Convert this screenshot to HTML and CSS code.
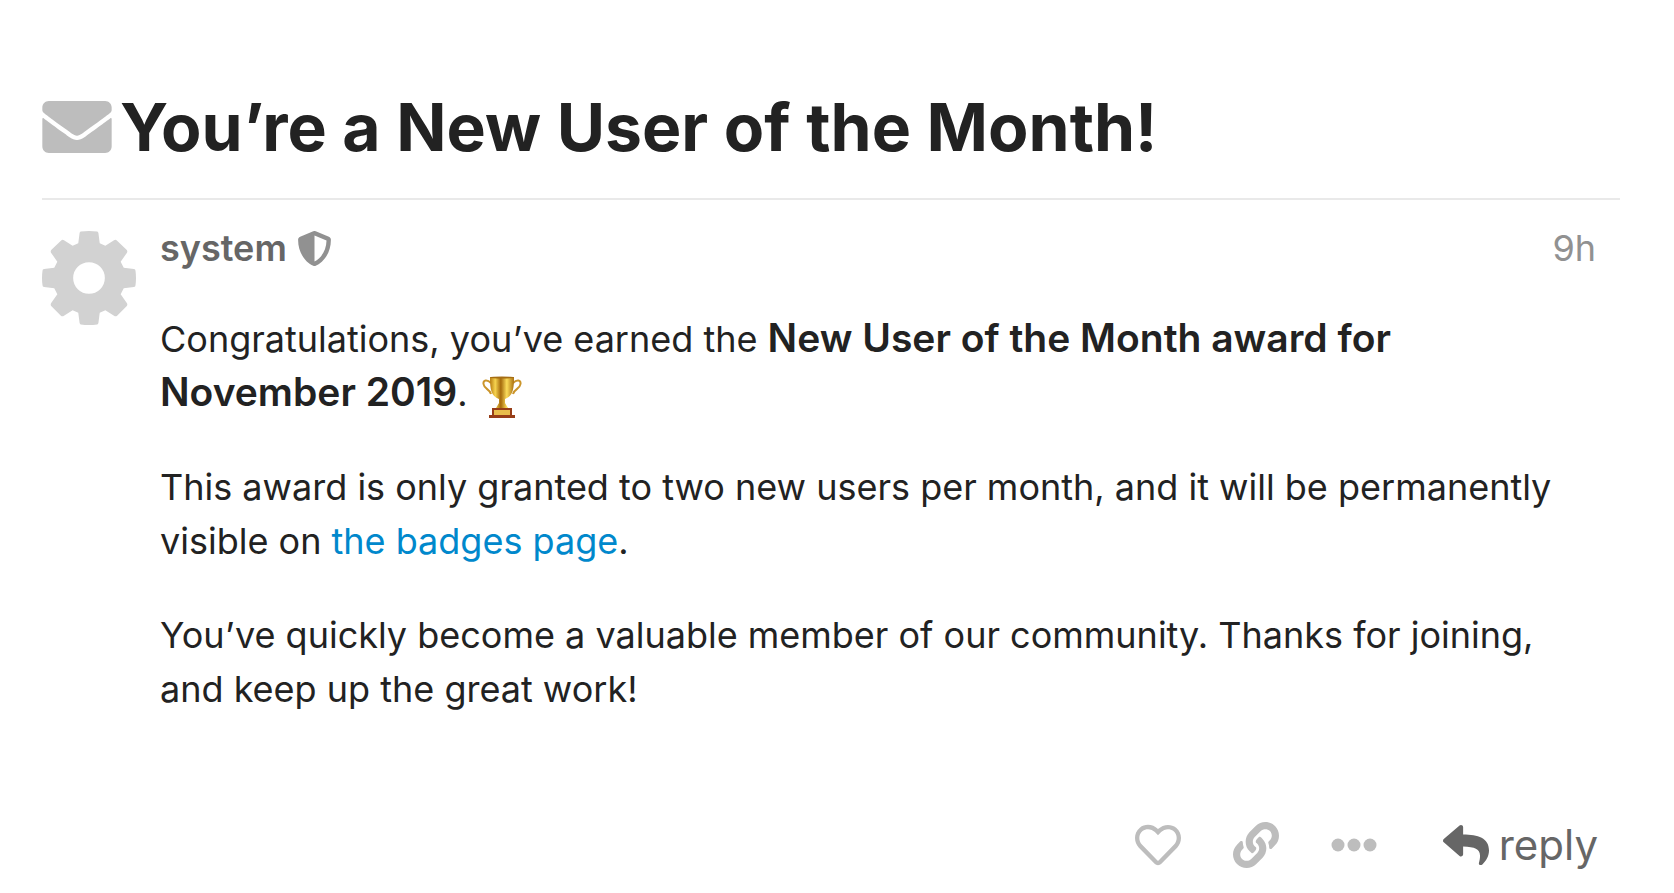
FILE: index.html
```html
<!DOCTYPE html>
<html lang="en">
    <head>
        <meta charset="UTF-8" />
        <meta name="viewport" content="width=device-width, initial-scale=1.0" />
        <title>You’re a New User of the Month!</title>
        <link rel="stylesheet" href="styles.css">
    </head>
    <body>
        <main class="topic">
            <header class="topic-header">
                <svg class="icon-envelope" viewBox="0 64 512 384" aria-hidden="true">
                    <path d="M502.3 190.8c3.9-3.1 9.7-.2 9.7 4.7V400c0 26.5-21.5 48-48 48H48c-26.5 0-48-21.5-48-48V195.6c0-5 5.7-7.8 9.7-4.7 22.4 17.4 52.1 39.5 154.1 113.6 21.1 15.4 56.7 47.8 92.2 47.6 35.7.3 72-32.8 92.3-47.6 102-74.1 131.6-96.3 154-113.7zM256 320c23.2.4 56.6-29.2 73.4-41.4 132.7-96.3 142.8-104.7 173.4-128.7 5.8-4.5 9.2-11.5 9.2-18.9v-19c0-26.5-21.5-48-48-48H48c-26.5 0-48 21.5-48 48v19c0 7.4 3.4 14.3 9.2 18.9 30.6 23.9 40.7 32.4 173.4 128.7 16.8 12.2 50.2 41.8 73.4 41.4z"/>
                </svg>
                <h1>You’re a New User of the Month!</h1>
            </header>

            <article class="post">
                <svg class="avatar" viewBox="1 1 92 92" aria-hidden="true">
                    <path fill-rule="evenodd" d="M39 1.500Q47 0.500 55 1.500Q56 1.700 56.200 3L57.500 13L63 15.500L71.500 10Q73 9 74.500 10.500L84 19.500Q85 21 84 22.500L78 31L81 37L91 38.200Q92.500 38.500 92.500 40Q93.500 47 92.500 54Q92.500 55.500 91 55.800L81 57L78 63L84 71.500Q85 73 84 74.500L74.500 84Q73 85 71.500 84L63 78.500L57.500 81L56.200 91Q56 92.300 55 92.500Q47 93.500 39 92.500Q38 92.300 37.800 91L36.500 81L31 78.500L22.500 84Q21 85 19.500 84L10 74.500Q9 73 10 71.500L16 63L13 57L3 55.800Q1.500 55.500 1.500 54Q0.500 47 1.500 40Q1.500 38.500 3 38.200L13 37L16 31L10 22.500Q9 21 10 19.500L19.500 10.500Q21 9 22.500 10L31 15.500L36.500 13L37.800 3Q38 1.700 39 1.500ZM47 31.500a15.500 15.500 0 1 0 0 31a15.500 15.500 0 1 0 0-31z"/>
                </svg>
                <div class="post-body">
                    <div class="post-meta">
                        <span class="username">system</span>
                        <svg class="icon-shield" viewBox="0 0 512 512" aria-hidden="true">
                            <path d="M466.5 83.7l-192-80a48.15 48.15 0 0 0-36.9 0l-192 80C27.7 91.1 16 108.6 16 128c0 198.5 114.5 335.7 221.5 380.3 11.8 4.9 25.1 4.9 36.9 0C360.1 472.6 496 349.3 496 128c0-19.4-11.7-36.9-29.5-44.3zM256.1 446.3l-.1-381 175.9 73.3c-3.3 151.4-82.1 261.1-175.8 307.7z"/>
                        </svg>
                        <time class="post-date">9h</time>
                    </div>

                    <div class="cooked">
                        <p>
                            Congratulations, you’ve earned the <strong>New User of the Month award for<br>November 2019</strong>.
                            <svg class="trophy" viewBox="0 0 40 42" role="img" aria-label="trophy">
                                <defs>
                                    <linearGradient id="gold">
                                        <stop offset="0" stop-color="#b67a10"/>
                                        <stop offset=".22" stop-color="#f6d34f"/>
                                        <stop offset=".45" stop-color="#a56a0c"/>
                                        <stop offset=".7" stop-color="#fbdc5a"/>
                                        <stop offset="1" stop-color="#a96e0e"/>
                                    </linearGradient>
                                </defs>
                                <path d="M9 7C5 3 1 4 1.500 8C2 13 8 13 9 18M31 7C35 3 39 4 38.500 8C38 13 32 13 31 18" fill="none" stroke="#cb952b" stroke-width="2"/>
                                <path d="M8 1H32C32 13 31 20 23 23V27L26 32H14L17 27V23C9 20 8 13 8 1Z" fill="url(#gold)"/>
                                <ellipse cx="20" cy="1.500" rx="12" ry="1" fill="#a56d13"/>
                                <path d="M10 32H30V39H33V42H7V39H10Z" fill="#973d18"/>
                                <path d="M12 34H28V39H12Z" fill="#e9bd4b"/>
                            </svg>
                        </p>
                        <p>This award is only granted to two new users per month, and it will be permanently visible on <a href="#">the badges page</a>.</p>
                        <p>You’ve quickly become a valuable member of our community. Thanks for joining, and keep up the great work!</p>
                    </div>

                    <div class="post-controls">
                        <button type="button" aria-label="Like">
                            <svg class="icon" viewBox="0 0 512 512" aria-hidden="true">
                                <path d="M458.4 64.3C400.6 15.7 311.3 23 256 79.3 200.7 23 111.4 15.6 53.6 64.3-21.6 127.6-10.6 230.8 43 285.5l175.400 178.700c10 10.2 23.4 15.9 37.6 15.9 14.3 0 27.6-5.6 37.6-15.8L469 285.6c53.5-54.7 64.7-157.9-10.6-221.3zm-23.6 187.5L259.4 430.5c-2.4 2.4-4.400 2.4-6.800 0L77.2 251.8c-36.5-37.2-43.9-107.6 7.3-150.7 38.9-32.7 98.9-27.8 136.5 10.5l35 35.700 35-35.700c37.8-38.5 97.8-43.2 136.5-10.6 51.1 43.1 43.5 113.9 7.3 150.8z"/>
                            </svg>
                        </button>
                        <button type="button" aria-label="Share link">
                            <svg class="icon" viewBox="0 0 512 512" aria-hidden="true">
                                <path d="M326.612 185.391c59.747 59.809 58.927 155.698.36 214.59-.11.12-.24.25-.36.37l-67.2 67.2c-59.27 59.27-155.699 59.262-214.96 0-59.27-59.26-59.27-155.7 0-214.96l37.106-37.106c9.84-9.84 26.786-3.3 27.294 10.606.648 17.722 3.826 35.527 9.69 52.721 1.986 5.822.567 12.262-3.783 16.612l-13.087 13.087c-28.026 28.026-28.905 73.66-1.155 101.96 28.024 28.579 74.086 28.749 102.325.51l67.2-67.19c28.191-28.191 28.073-73.757 0-101.83-3.701-3.694-7.429-6.564-10.341-8.569a16.037 16.037 0 0 1-6.947-12.606c-.396-10.567 3.348-21.456 11.698-29.806l21.054-21.055c5.521-5.521 14.182-6.199 20.584-1.731a152.482 152.482 0 0 1 20.522 17.197zM467.547 44.449c-59.261-59.262-155.69-59.27-214.96 0l-67.2 67.2c-.12.12-.25.25-.36.37-58.566 58.892-59.387 154.781.36 214.59a152.454 152.454 0 0 0 20.521 17.196c6.402 4.468 15.064 3.789 20.584-1.731l21.054-21.055c8.35-8.35 12.094-19.239 11.698-29.806a16.037 16.037 0 0 0-6.947-12.606c-2.912-2.005-6.64-4.875-10.341-8.569-28.073-28.073-28.191-73.639 0-101.83l67.2-67.19c28.239-28.239 74.3-28.069 102.325.51 27.75 28.3 26.872 73.934-1.155 101.96l-13.087 13.087c-4.35 4.35-5.769 10.79-3.783 16.612 5.864 17.194 9.042 34.999 9.69 52.721.509 13.906 17.454 20.446 27.294 10.606l37.106-37.106c59.271-59.259 59.271-155.699.001-214.959z"/>
                            </svg>
                        </button>
                        <button type="button" aria-label="Show more">
                            <svg class="icon" viewBox="0 0 46 46" aria-hidden="true">
                                <circle cx="7" cy="23" r="6.500"/>
                                <circle cx="23" cy="23" r="6.500"/>
                                <circle cx="39" cy="23" r="6.500"/>
                            </svg>
                        </button>
                        <button type="button" class="reply">
                            <svg class="icon" viewBox="0 0 512 512" aria-hidden="true">
                                <path d="M8.309 189.836L184.313 37.851C199.719 24.546 224 35.347 224 56.015v84.053C390 142 512 178 512 318C512 382 480 434 438 472C420 488 394 476 400 456C438 310 390 278 224 272V360c0 20.7-24.3 31.453-39.687 18.164l-176.004-152c-11.071-9.562-11.086-26.753 0-36.328z"/>
                            </svg>
                            reply
                        </button>
                    </div>
                </div>
            </article>
        </main>
    </body>
</html>
```
FILE: styles.css
```css
* {
    margin: 0;
    padding: 0;
    box-sizing: border-box;
}

body {
    font-family: Inter, 'Liberation Sans', sans-serif;
    font-size: 36px;
    line-height: 54px;
    color: #222;
    background-color: #fff;
}

svg {
    fill: currentColor;
    flex-shrink: 0;
}

.topic {
    padding: 87px 54px 0 42px;
}

.topic-header {
    display: flex;
    align-items: center;
    gap: 8px;
    padding-bottom: 31px;
    border-bottom: 2px solid #e9e9e9;
}

.icon-envelope {
    width: 70px;
    height: 52px;
    color: #bdbdbd;
}

h1 {
    font-size: 66px;
    line-height: 80px;
    font-weight: 700;
}

.post {
    display: flex;
    gap: 24px;
    padding-top: 20px;
}

.avatar {
    width: 94px;
    height: 94px;
    margin-top: 11px;
    color: #d2d2d2;
}

.post-body {
    flex: 1;
}

.post-meta {
    display: flex;
    align-items: center;
    gap: 10px;
    padding-right: 24px;
    line-height: 56px;
}

.username {
    font-weight: 600;
    color: #666;
}

.icon-shield {
    width: 35px;
    height: 35px;
    color: #919191;
}

.post-date {
    margin-left: auto;
    color: #919191;
}

.cooked {
    padding: 36px 40px 0 0;
}

.cooked p {
    margin-bottom: 40px;
}

.cooked strong {
    font-size: 39px;
    font-weight: 600;
    line-height: 1;
}

.cooked a {
    color: #08c;
    text-decoration: none;
}

.trophy {
    width: 40px;
    height: 42px;
    margin-left: 4px;
    vertical-align: -12px;
}

.post-controls {
    display: flex;
    justify-content: flex-end;
    align-items: center;
    gap: 52px;
    padding: 62px 22px 0 0;
}

button {
    display: flex;
    align-items: center;
    border: none;
    background: none;
    color: #bdbdbd;
    font-family: inherit;
    cursor: pointer;
}

.icon {
    width: 46px;
    height: 46px;
}

.reply {
    gap: 10px;
    margin-left: 14px;
    color: #666;
    font-size: 42px;
    line-height: 54px;
}
```
